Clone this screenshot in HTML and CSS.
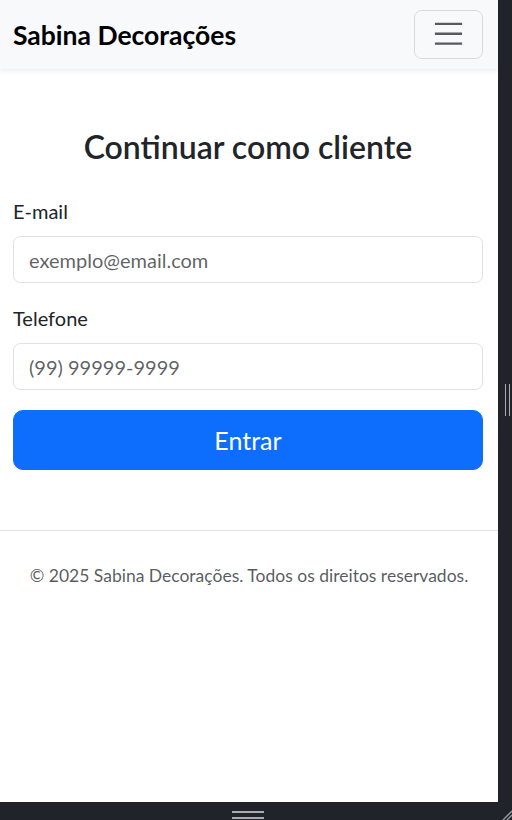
FILE: index.html
```html
<!DOCTYPE html>
<html lang="pt-BR">
<head>
<meta charset="utf-8">
<title>Sabina Decorações</title>
<link rel="stylesheet" href="styles.css">
</head>
<body>
<div class="window">
  <div class="viewport">
    <nav class="navbar">
      <a class="brand" href="#">Sabina Decorações</a>
      <button class="toggler" type="button" aria-label="Menu">
        <svg class="toggler-icon" viewBox="0 0 30 30" width="37.5" height="37.5"><path d="M4 7h22M4 15h22M4 23h22" stroke="rgba(33,37,41,0.75)" stroke-width="2" stroke-linecap="butt" fill="none"/></svg>
      </button>
    </nav>
    <main class="container">
      <h2 class="title">Continuar como cliente</h2>
      <form class="form">
        <div class="field">
          <label class="label" for="email">E-mail</label>
          <input class="input" id="email" type="email" placeholder="exemplo@email.com">
        </div>
        <div class="field">
          <label class="label" for="tel">Telefone</label>
          <input class="input" id="tel" type="tel" placeholder="(99) 99999-9999">
        </div>
        <button class="btn" type="button">Entrar</button>
      </form>
    </main>
    <footer class="footer">
      <p class="copy">© 2025 Sabina Decorações. Todos os direitos reservados.</p>
    </footer>
  </div>
  <div class="frame-right">
    <div class="vhandle"></div>
  </div>
  <div class="frame-bottom">
    <div class="hhandle"></div>
    <svg class="corner" viewBox="0 0 10 10" width="10" height="10"><path d="M10 1L1 10M10 5L5 10" stroke="#9a9da1" stroke-width="1.3" fill="none"/></svg>
  </div>
</div>
</body>
</html>
```
FILE: styles.css
```css
* { box-sizing: border-box; }
html, body { margin: 0; padding: 0; }
body {
  background: #202329;
  font-family: Lato, "Noto Sans", sans-serif;
  color: #212529;
}
.window {
  display: grid;
  grid-template-columns: 498px 14px;
  grid-template-rows: 802px 18px;
  width: 512px;
  height: 820px;
  overflow: hidden;
}
.viewport {
  background: #fff;
  overflow: hidden;
}
.navbar {
  height: 69px;
  background: #f8f9fa;
  box-shadow: 0 2px 5px rgba(0,0,0,0.075);
  display: flex;
  align-items: center;
  justify-content: space-between;
  padding: 0 15px 0 13px;
  position: relative;
}
.brand {
  font-size: 26.5px;
  font-weight: 700;
  line-height: 30px;
  color: #000;
  text-decoration: none;
}
.toggler {
  width: 69px;
  height: 49px;
  margin-top: -1px;
  padding: 5px 15px;
  border: 1px solid rgba(0,0,0,0.12);
  border-radius: 7.5px;
  background: transparent;
  display: flex;
  align-items: center;
  justify-content: center;
}
.toggler-icon { display: block; }
.container {
  padding: 59px 15px 0 13px;
}
.title {
  margin: 0 0 30px;
  font-size: 32px;
  font-weight: 600;
  line-height: 1.2;
  text-align: center;
  color: #212529;
}
.form {
  display: flex;
  flex-direction: column;
}
.field {
  display: flex;
  flex-direction: column;
  margin-bottom: 20px;
}
.label {
  font-size: 20px;
  line-height: 30px;
  margin-bottom: 10px;
}
.input {
  height: 47px;
  padding: 7.5px 15px;
  font-family: inherit;
  font-size: 20px;
  line-height: 30px;
  color: #212529;
  background: #fff;
  border: 1px solid #dee2e6;
  border-radius: 7.5px;
}
.input::placeholder { color: rgba(33,37,41,0.72); }
.btn {
  height: 60px;
  font-family: inherit;
  font-size: 25px;
  line-height: 30px;
  color: #fff;
  background: #0d6efd;
  border: 1px solid #0d6efd;
  border-radius: 10px;
  margin-bottom: 60px;
}
.footer {
  border-top: 1px solid #dee2e6;
  padding-top: 32px;
  text-align: center;
}
.copy {
  margin: 0;
  font-size: 17.5px;
  line-height: 26px;
  color: rgba(33,37,41,0.75);
}
.frame-right {
  display: flex;
  align-items: flex-start;
  justify-content: flex-end;
  padding: 384px 2px 0 0;
}
.vhandle {
  width: 5px;
  height: 32px;
  border-left: 1.5px solid #a9abae;
  border-right: 1.5px solid #a9abae;
}
.frame-bottom {
  grid-column: 1 / 3;
  position: relative;
  padding: 9px 0 0 232px;
}
.hhandle {
  width: 32px;
  height: 8px;
  border-top: 2px solid #a9abae;
  border-bottom: 2px solid #a9abae;
}
.corner {
  position: absolute;
  right: 0;
  bottom: 0;
}
```
